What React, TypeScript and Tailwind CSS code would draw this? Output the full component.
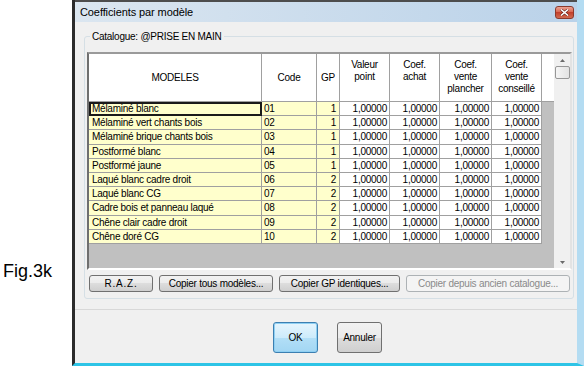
import React from 'react';

const rows: [string, string, number][] = [
  ['Mélaminé blanc', '01', 1],
  ['Mélaminé vert chants bois', '02', 1],
  ['Mélaminé brique chants bois', '03', 1],
  ['Postformé blanc', '04', 1],
  ['Postformé jaune', '05', 1],
  ['Laqué blanc cadre droit', '06', 2],
  ['Laqué blanc CG', '07', 2],
  ['Cadre bois et panneau laqué', '08', 2],
  ['Chêne clair cadre droit', '09', 2],
  ['Chêne doré CG', '10', 2]
];

const headers = [
  { w: 'w-[173px]', lines: ['MODELES'] },
  { w: 'w-[55px]', lines: ['Code'] },
  { w: 'w-[23px]', lines: ['GP'] },
  { w: 'w-[50px]', lines: ['Valeur', 'point'] },
  { w: 'w-[50px]', lines: ['Coef.', 'achat'] },
  { w: 'w-[52px]', lines: ['Coef.', 'vente', 'plancher'] },
  { w: 'w-[50px]', lines: ['Coef.', 'vente', 'conseillé'] }
];

const valueCols = ['w-[50px]', 'w-[50px]', 'w-[52px]', 'w-[50px]'];

function Arrow({ down = false }: { down?: boolean }) {
  return (
    <svg width="5" height="3" viewBox="0 0 5 3">
      <polygon points={down ? '0,0 5,0 2.5,3' : '0,3 5,3 2.5,0'} fill="#6a6a6a" />
    </svg>
  );
}

function WinButton({ label, className = '', disabled = false }: { label: string; className?: string; disabled?: boolean }) {
  return (
    <button
      className={`h-[17px] rounded-[3px] border flex items-center justify-center leading-none whitespace-nowrap ${
        disabled
          ? 'border-[#adb2b5] bg-[#f4f4f4] text-[#8a8a8a]'
          : 'border-[#707070] bg-[linear-gradient(#f2f2f2,#ebebeb_50%,#dddddd_50%,#cfcfcf)] text-black'
      } ${className}`}>
      {label}
    </button>
  );
}

export default function App() {
  return (
    <div className="w-[584px] h-[366px] flex bg-white overflow-hidden font-['Liberation_Sans',Arial,sans-serif] text-[10px] tracking-[-0.25px] text-black">
      {/* Figure caption */}
      <div className="w-[72px] shrink-0 pt-[261px] pl-[3px] text-[18px] leading-[20px] tracking-normal">
        Fig.3k
      </div>

      {/* Window */}
      <div className="flex-1 flex flex-col border-l-[3px] border-l-[#2b2b2b] border-r-[7px] border-r-[#b4dcf2] border-b-[3px] border-b-[#2ec4e6]">
        {/* Title bar */}
        <div className="h-[22px] shrink-0 border-t-2 border-t-[#4d4d4d] bg-gradient-to-r from-[#dbe6f0] to-[#bad2e9] flex items-center justify-between pl-[5px] pr-[3px]">
          <span className="text-[11px] leading-none tracking-[-0.1px]">Coefficients par modèle</span>
          <div className="w-[19px] h-[13px] rounded-[3px] border border-[#8b3a2c] bg-[linear-gradient(#eba393,#d6604a_50%,#c2402c_50%,#d06a4f)] flex items-center justify-center">
            <svg width="9" height="7" viewBox="0 0 9 7">
              <path d="M1 0.5 L8 6.5 M8 0.5 L1 6.5" stroke="#5a1a10" strokeWidth="2.6" />
              <path d="M1 0.5 L8 6.5 M8 0.5 L1 6.5" stroke="#ffffff" strokeWidth="1.6" />
            </svg>
          </div>
        </div>

        {/* Client area */}
        <div className="flex-1 flex flex-col bg-[#f0f0f0]">
          <fieldset className="mt-[8px] ml-[9px] mr-[3px] border border-[#d5dfe5] rounded-[3px] pl-[2px] pr-[1px] pb-[6px]">
            <legend className="ml-[3px] px-[2px] leading-[13px]">Catalogue: @PRISE EN MAIN</legend>

            {/* Grid */}
            <div className="mt-[9px] h-[218px] flex border-2 border-t-[#9a9a9a] border-l-[#6f6f6f] border-r-[#e3e3e3] border-b-[#ffffff]">
              <div className="flex-1 flex flex-col bg-[#c0c0c0]">
                {/* Header */}
                <div className="flex h-[48px] shrink-0 bg-white border-b border-[#a0a0a0]">
                  {headers.map((h) => (
                    <div
                      key={h.lines.join('-')}
                      className={`${h.w} shrink-0 border-r border-[#a0a0a0] flex flex-col items-center leading-[12px] ${
                        h.lines.length > 1 ? 'justify-start pt-[5px]' : 'justify-center'
                      }`}>
                      {h.lines.map((l) => (
                        <span key={l}>{l}</span>
                      ))}
                    </div>
                  ))}
                  <div className="flex-1" />
                </div>

                {/* Rows */}
                {rows.map(([name, code, gp], i) => (
                  <div key={code} className="flex h-[14.2px] shrink-0 leading-[13px]">
                    <div
                      className={`w-[173px] shrink-0 border-r border-b border-[#a0a0a0] bg-[#ffffcc] pl-[3px] flex items-center ${
                        i === 0 ? 'outline-2 outline-solid -outline-offset-2 outline-[#1a1a1a]' : ''
                      }`}>
                      {name}
                    </div>
                    <div className="w-[55px] shrink-0 border-r border-b border-[#a0a0a0] bg-[#ffffcc] pl-[2px] flex items-center">
                      {code}
                    </div>
                    <div className="w-[23px] shrink-0 border-r border-b border-[#a0a0a0] bg-[#ffffcc] pr-[3px] flex items-center justify-end">
                      {gp}
                    </div>
                    {valueCols.map((w, j) => (
                      <div
                        key={j}
                        className={`${w} shrink-0 border-r border-b border-[#a0a0a0] bg-white pr-[2px] flex items-center justify-end`}>
                        1,00000
                      </div>
                    ))}
                  </div>
                ))}
              </div>

              {/* Scrollbar */}
              <div className="w-[16px] shrink-0 bg-[#f0f0f0] flex flex-col items-center">
                <div className="h-[12px] w-full flex items-center justify-center">
                  <Arrow />
                </div>
                <div className="h-[13px] w-[15px] rounded-[2px] border border-[#979797] bg-[linear-gradient(to_right,#f5f5f5,#e3e3e3)]" />
                <div className="flex-1" />
                <div className="h-[12px] w-full flex items-center justify-center">
                  <Arrow down />
                </div>
              </div>
            </div>

            {/* Action buttons */}
            <div className="mt-[5px] flex gap-[6px] pl-[2px]">
              <WinButton label="R.A.Z." className="w-[64px] tracking-[0.8px]" />
              <WinButton label="Copier tous modèles..." className="w-[114px]" />
              <WinButton label="Copier GP identiques..." className="w-[121px]" />
              <WinButton label="Copier depuis ancien catalogue..." className="w-[164px]" disabled />
            </div>
          </fieldset>

          {/* Separator */}
          <div className="mt-[10px] h-px bg-[#d8d8d8]" />

          {/* Dialog buttons */}
          <div className="mt-[12px] flex justify-center gap-[19px] pl-[3px]">
            <button className="w-[45px] h-[31px] rounded-[3px] border border-[#3c7fb1] bg-[linear-gradient(#e6f5fd,#cdebfb_50%,#b3dff7_50%,#a2d6f3)] shadow-[inset_0_0_0_1px_#8fd0f3] flex items-center justify-center">
              OK
            </button>
            <button className="w-[45px] h-[31px] rounded-[3px] border border-[#707070] bg-[linear-gradient(#f2f2f2,#ebebeb_50%,#dddddd_50%,#cfcfcf)] flex items-center justify-center">
              Annuler
            </button>
          </div>
        </div>
      </div>
    </div>
  );
}
